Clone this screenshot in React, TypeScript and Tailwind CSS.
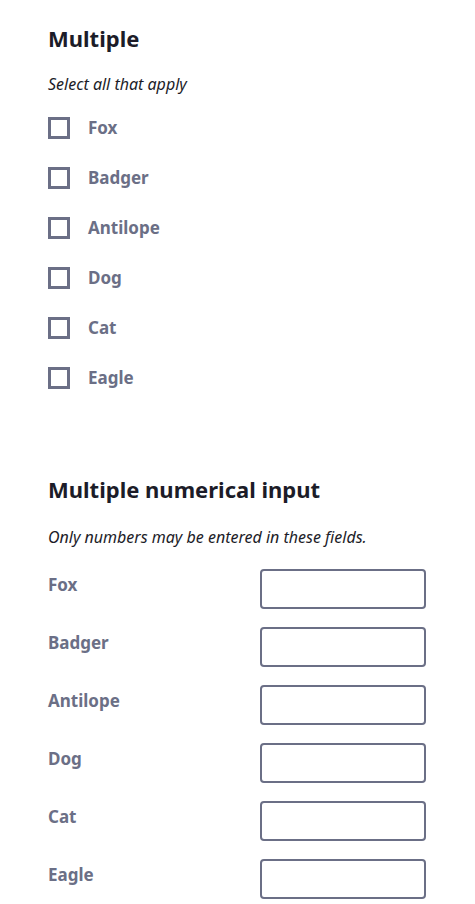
const animals = ["Fox", "Badger", "Antilope", "Dog", "Cat", "Eagle"];

export default function App() {
  return (
    <div className="min-h-screen bg-white px-12 pt-[22px] font-['Noto_Sans',sans-serif] text-[#1c1c28]">
      {/* Multiple */}
      <section>
        <h2 className="text-[22px] font-bold leading-[32px]">Multiple</h2>
        <p className="mt-[19px] text-[16px] italic leading-[22px]">Select all that apply</p>
        <div className="mt-[22px] flex flex-col gap-[28px]">
          {animals.map((a) => (
            <label key={a} className="flex h-[22px] items-center gap-[18px]">
              <span className="h-[22px] w-[22px] shrink-0 border-[3px] border-[#6b6f86] bg-white" />
              <span className="text-[17px] font-bold text-[#6b6f86]">{a}</span>
            </label>
          ))}
        </div>
      </section>

      {/* Multiple numerical input */}
      <section className="mt-[84px]">
        <h2 className="text-[22px] font-bold leading-[32px]">Multiple numerical input</h2>
        <p className="mt-[21px] text-[16px] italic leading-[22px]">
          Only numbers may be entered in these fields.
        </p>
        <div className="mt-[21px] flex w-[378px] flex-col gap-[18px]">
          {animals.map((a) => (
            <div key={a} className="flex items-start justify-between">
              <span className="pt-[3px] text-[17px] font-bold text-[#6b6f86]">{a}</span>
              <input
                type="text"
                inputMode="numeric"
                className="h-[40px] w-[166px] rounded-[4px] border-2 border-[#6b6f86] bg-white px-2 outline-none"
              />
            </div>
          ))}
        </div>
      </section>
    </div>
  );
}
